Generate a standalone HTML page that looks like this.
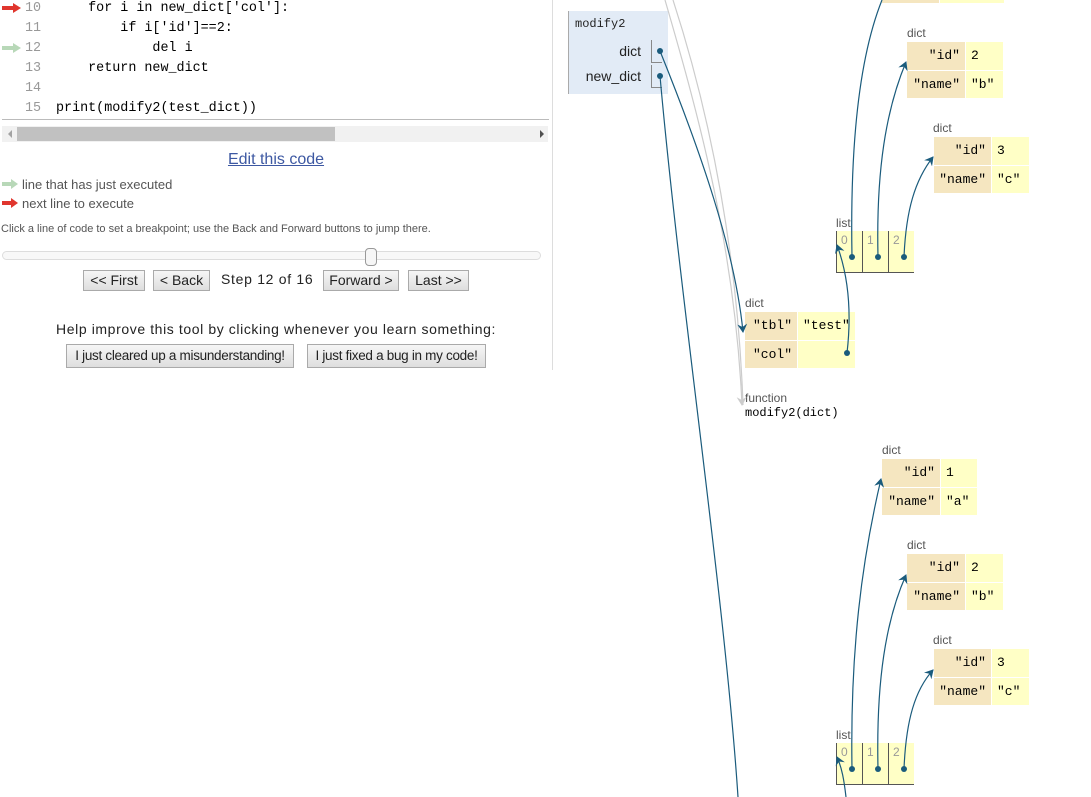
<!DOCTYPE html>
<html><head><meta charset="utf-8"><style>
body{margin:0;width:1091px;height:797px;background:#fff;position:relative;overflow:hidden;font-family:"Liberation Sans",sans-serif;}
.a{position:absolute;white-space:pre;}
.mono{font-family:"Liberation Mono",monospace;}
.ln{color:#999;font-size:13.4px;font-family:"Liberation Mono",monospace;}
.code{font-size:13.4px;color:#000;font-family:"Liberation Mono",monospace;}
.btn{position:absolute;box-sizing:border-box;border:1px solid #aaa;background:linear-gradient(#f6f6f6,#dedede);font-size:14px;color:#222;text-align:center;line-height:19px;white-space:nowrap;overflow:hidden;}
.lbl{position:absolute;font-size:12px;color:#555;}
.k{position:absolute;background:#f5e6c0;font-family:"Liberation Mono",monospace;font-size:13px;text-align:right;box-sizing:border-box;padding-right:5px;}
.v{position:absolute;background:#ffffc6;font-family:"Liberation Mono",monospace;font-size:13px;box-sizing:border-box;padding-left:5px;}
</style></head><body>
<svg class="a" style="left:0;top:0" width="30" height="60"><path d="M2,8 H14" stroke="#e0362e" stroke-width="4"/><path d="M13,3 L21,8 L13,13Z" fill="#e0362e"/><path d="M2,48 H14" stroke="#b8d8b8" stroke-width="4"/><path d="M13,43 L21,48 L13,53Z" fill="#b8d8b8"/></svg>
<div class="a ln" style="left:25px;line-height:20px;top:-1px">10
11
12
13
14
15</div>
<div class="a code" style="left:56px;top:-1px;line-height:20px">    for i in new_dict['col']:
        if i['id']==2:
            del i
    return new_dict

print(modify2(test_dict))</div>
<div class="a" style="left:2px;top:119px;width:547px;height:1px;background:#bbb"></div>
<div class="a" style="left:2px;top:126px;width:546px;height:16px;background:#f1f1f1"></div>
<div class="a" style="left:17px;top:127px;width:318px;height:14px;background:#c1c1c1"></div>
<svg class="a" style="left:2px;top:126px" width="547" height="16"><path d="M10,4 L6,8 L10,12Z" fill="#a3a3a3"/><path d="M538,4 L542,8 L538,12Z" fill="#505050"/></svg>
<div class="a" style="left:552px;top:0;width:1px;height:370px;background:#ddd"></div>
<div class="a" style="left:0;width:552px;top:151px;text-align:center;font-size:16px;color:#3d58a2;text-decoration:underline">Edit this code</div>
<svg class="a" style="left:0;top:176px" width="22" height="32"><path d="M2,8 H12" stroke="#b8d8b8" stroke-width="4"/><path d="M11,3 L18,8 L11,13Z" fill="#b8d8b8"/><path d="M2,27 H12" stroke="#e0362e" stroke-width="4"/><path d="M11,22 L18,27 L11,32Z" fill="#e0362e"/></svg>
<div class="a" style="left:22px;top:175px;font-size:13px;color:#555;line-height:19px">line that has just executed
next line to execute</div>
<div class="a" style="left:1px;top:223px;font-size:11px;color:#555">Click a line of code to set a breakpoint; use the Back and Forward buttons to jump there.</div>
<div class="a" style="left:2px;top:251px;width:539px;height:9px;border:1px solid #ddd;border-radius:5px;background:#f8f8f8;box-sizing:border-box"></div>
<div class="a" style="left:365px;top:248px;width:12px;height:18px;border:1px solid #999;border-radius:4px;background:#f6f6f6;box-sizing:border-box"></div>
<div class="btn" style="left:83px;top:270px;width:62px;height:21px">&lt;&lt; First</div>
<div class="btn" style="left:153px;top:270px;width:57px;height:21px">&lt; Back</div>
<div class="a" style="left:221px;top:271px;font-size:14px;color:#222;letter-spacing:0.7px">Step 12 of 16</div>
<div class="btn" style="left:323px;top:270px;width:76px;height:21px">Forward &gt;</div>
<div class="btn" style="left:408px;top:270px;width:61px;height:21px">Last &gt;&gt;</div>
<div class="a" style="left:0;width:552px;top:321px;text-align:center;font-size:14px;color:#222;letter-spacing:0.6px">Help improve this tool by clicking whenever you learn something:</div>
<div class="btn" style="left:66px;top:344px;width:228px;height:24px;line-height:22px;font-size:13.5px;letter-spacing:-0.3px">I just cleared up a misunderstanding!</div>
<div class="btn" style="left:307px;top:344px;width:179px;height:24px;line-height:22px;font-size:13.5px;letter-spacing:-0.3px">I just fixed a bug in my code!</div>

<div class="a" style="left:568px;top:11px;width:100px;height:83px;background:#e2ebf6;border-left:1px solid #aaa;box-sizing:border-box"></div>
<div class="a mono" style="left:575px;top:17px;font-size:12px;color:#222">modify2</div>
<div class="a" style="left:568px;width:73px;top:43px;text-align:right;font-size:14px;color:#222">dict</div>
<div class="a" style="left:568px;width:73px;top:68px;text-align:right;font-size:14px;color:#222">new_dict</div>
<div class="a" style="left:651px;top:40px;width:10px;height:22px;border-left:1px solid #888;border-bottom:1px solid #888"></div>
<div class="a" style="left:651px;top:65px;width:10px;height:22px;border-left:1px solid #888;border-bottom:1px solid #888"></div>

<div class="k" style="left:882px;top:-10px;width:57px;height:13px"></div><div class="v" style="left:940px;top:-10px;width:64px;height:13px"></div>
<div class="lbl" style="left:907px;top:26px">dict</div>
<div class="k" style="left:907px;top:42px;width:58px;height:28px;line-height:28px">"id"</div><div class="v" style="left:966px;top:42px;width:37px;height:28px;line-height:28px">2</div>
<div class="k" style="left:907px;top:71px;width:58px;height:27px;line-height:27px">"name"</div><div class="v" style="left:966px;top:71px;width:37px;height:27px;line-height:27px">"b"</div>
<div class="lbl" style="left:933px;top:121px">dict</div>
<div class="k" style="left:934px;top:137px;width:57px;height:28px;line-height:28px">"id"</div><div class="v" style="left:992px;top:137px;width:37px;height:28px;line-height:28px">3</div>
<div class="k" style="left:934px;top:166px;width:57px;height:27px;line-height:27px">"name"</div><div class="v" style="left:992px;top:166px;width:37px;height:27px;line-height:27px">"c"</div>
<div class="lbl" style="left:836px;top:216px">list</div>
<div class="a" style="left:836px;top:231px;width:78px;height:42px;background:#ffffc6;border-left:1px solid #555;border-bottom:1px solid #555;box-sizing:border-box"></div>
<div class="a" style="left:862px;top:231px;width:1px;height:42px;background:#555"></div><div class="a" style="left:888px;top:231px;width:1px;height:42px;background:#555"></div>
<div class="a" style="left:841px;top:233px;font-size:12px;color:#999">0</div><div class="a" style="left:867px;top:233px;font-size:12px;color:#999">1</div><div class="a" style="left:893px;top:233px;font-size:12px;color:#999">2</div>
<div class="lbl" style="left:745px;top:296px">dict</div>
<div class="k" style="left:745px;top:312px;width:52px;height:28px;line-height:28px">"tbl"</div><div class="v" style="left:798px;top:312px;width:57px;height:28px;line-height:28px">"test"</div>
<div class="k" style="left:745px;top:341px;width:52px;height:27px;line-height:27px">"col"</div><div class="v" style="left:798px;top:341px;width:57px;height:27px"></div>
<div class="lbl" style="left:745px;top:391px">function</div>
<div class="a mono" style="left:745px;top:406px;font-size:12px;color:#000">modify2(dict)</div>

<div class="lbl" style="left:882px;top:443px">dict</div>
<div class="k" style="left:882px;top:459px;width:58px;height:28px;line-height:28px">"id"</div><div class="v" style="left:941px;top:459px;width:36px;height:28px;line-height:28px">1</div>
<div class="k" style="left:882px;top:488px;width:58px;height:27px;line-height:27px">"name"</div><div class="v" style="left:941px;top:488px;width:36px;height:27px;line-height:27px">"a"</div>
<div class="lbl" style="left:907px;top:538px">dict</div>
<div class="k" style="left:907px;top:554px;width:58px;height:28px;line-height:28px">"id"</div><div class="v" style="left:966px;top:554px;width:37px;height:28px;line-height:28px">2</div>
<div class="k" style="left:907px;top:583px;width:58px;height:27px;line-height:27px">"name"</div><div class="v" style="left:966px;top:583px;width:37px;height:27px;line-height:27px">"b"</div>
<div class="lbl" style="left:933px;top:633px">dict</div>
<div class="k" style="left:934px;top:649px;width:57px;height:28px;line-height:28px">"id"</div><div class="v" style="left:992px;top:649px;width:37px;height:28px;line-height:28px">3</div>
<div class="k" style="left:934px;top:678px;width:57px;height:27px;line-height:27px">"name"</div><div class="v" style="left:992px;top:678px;width:37px;height:27px;line-height:27px">"c"</div>
<div class="lbl" style="left:836px;top:728px">list</div>
<div class="a" style="left:836px;top:743px;width:78px;height:42px;background:#ffffc6;border-left:1px solid #555;border-bottom:1px solid #555;box-sizing:border-box"></div>
<div class="a" style="left:862px;top:743px;width:1px;height:42px;background:#555"></div><div class="a" style="left:888px;top:743px;width:1px;height:42px;background:#555"></div>
<div class="a" style="left:841px;top:745px;font-size:12px;color:#999">0</div><div class="a" style="left:867px;top:745px;font-size:12px;color:#999">1</div><div class="a" style="left:893px;top:745px;font-size:12px;color:#999">2</div>

<svg class="a" style="left:0;top:0" width="1091" height="797">
<defs>
<marker id="m" markerWidth="10" markerHeight="10" refX="8" refY="5" orient="auto" markerUnits="userSpaceOnUse"><path d="M0,0 L9,5 L0,10 L3,5Z" fill="#1a5b7c"/></marker>
<marker id="g" markerWidth="10" markerHeight="10" refX="8" refY="5" orient="auto" markerUnits="userSpaceOnUse"><path d="M0,0 L9,5 L0,10 L3,5Z" fill="#ccc"/></marker>
</defs>
<g fill="none" stroke-width="1.2">
<path d="M665,0 C700,120 735,250 742,405" stroke="#ccc" marker-end="url(#g)"/>
<path d="M673,0 C712,120 738,260 743,405" stroke="#ccc"/>
<g stroke="#1a5b7c">
<path d="M660,51 C700,150 735,250 743,332" marker-end="url(#m)"/>
<path d="M660,76 C680,300 725,600 738,797"/>
<path d="M852,257 C850,150 858,60 882,0"/>
<path d="M878,257 C876,170 886,110 906,62" marker-end="url(#m)"/>
<path d="M904,257 C906,210 915,180 933,157" marker-end="url(#m)"/>
<path d="M847,353 C852,310 848,275 837,245" marker-end="url(#m)"/>
<path d="M852,769 C850,650 862,560 881,479" marker-end="url(#m)"/>
<path d="M878,769 C876,680 886,620 906,575" marker-end="url(#m)"/>
<path d="M904,769 C906,720 915,690 933,670" marker-end="url(#m)"/>
<path d="M846,797 C844,780 842,768 837,757" marker-end="url(#m)"/>
</g></g>
<g fill="#1a5b7c"><circle cx="660" cy="51" r="3"/><circle cx="660" cy="76" r="3"/><circle cx="852" cy="257" r="3"/><circle cx="878" cy="257" r="3"/><circle cx="904" cy="257" r="3"/><circle cx="847" cy="353" r="3"/><circle cx="852" cy="769" r="3"/><circle cx="878" cy="769" r="3"/><circle cx="904" cy="769" r="3"/></g>
</svg>
</body></html>
